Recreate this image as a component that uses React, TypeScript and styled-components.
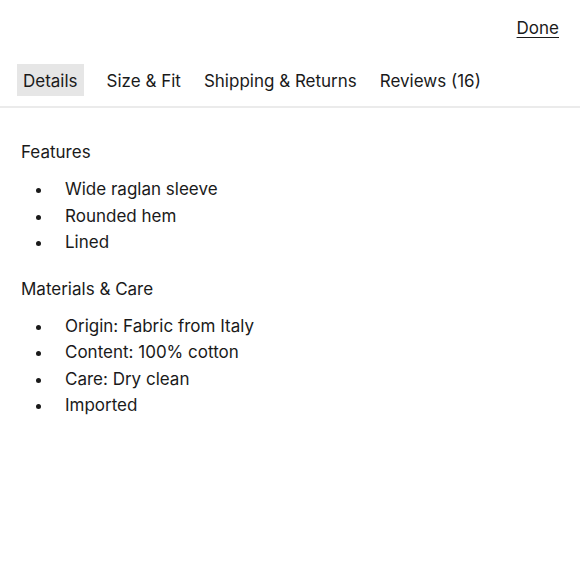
import styled, { createGlobalStyle } from 'styled-components';

const GlobalStyle = createGlobalStyle`
  html, body {
    margin: 0;
    padding: 0;
    background: #ffffff;
  }
  body {
    font-family: 'Inter', 'Noto Sans', sans-serif;
    color: #1a1a1a;
    -webkit-font-smoothing: antialiased;
  }
`;

const Page = styled.div`
  width: 580px;
  height: 580px;
  background: #fff;
  overflow: hidden;
`;

const TopBar = styled.header`
  display: flex;
  justify-content: flex-end;
  padding: 18px 21px 0 0;
  height: 48px;
  box-sizing: border-box;
`;

const DoneLink = styled.a`
  font-size: 17px;
  color: #1a1a1a;
  text-decoration: underline;
  text-underline-offset: 3px;
  cursor: pointer;
`;

const Tabs = styled.nav`
  display: flex;
  align-items: center;
  gap: 11px;
  padding: 16px 0 10px 17px;
  border-bottom: 2px solid #ebebeb;
`;

const Tab = styled.button<{ $active?: boolean }>`
  font-family: inherit;
  font-size: 17px;
  color: #1a1a1a;
  border: none;
  height: 32px;
  padding: 2px 6px 0;
  background: ${p => (p.$active ? '#e6e6e6' : 'transparent')};
  cursor: pointer;

  &:first-child {
    margin-right: 6px;
  }
`;

const Content = styled.section`
  padding: 32px 21px 0;
`;

const Heading = styled.h3`
  margin: 0 0 12px;
  font-size: 17px;
  font-weight: 400;
  line-height: 24px;
`;

const List = styled.ul`
  list-style: none;
  margin: 0 0 21px;
  padding: 0;
`;

const Item = styled.li`
  position: relative;
  font-size: 17px;
  line-height: 26.5px;
  padding-left: 44px;

  &::before {
    content: '';
    position: absolute;
    left: 15px;
    top: 12px;
    width: 5px;
    height: 5px;
    border-radius: 50%;
    background: #1a1a1a;
  }
`;

const sections = [
  {
    title: 'Features',
    items: ['Wide raglan sleeve', 'Rounded hem', 'Lined'],
  },
  {
    title: 'Materials & Care',
    items: [
      'Origin: Fabric from Italy',
      'Content: 100% cotton',
      'Care: Dry clean',
      'Imported',
    ],
  },
];

const tabs = ['Details', 'Size & Fit', 'Shipping & Returns', 'Reviews (16)'];

export default function App() {
  return (
    <Page>
      <GlobalStyle />
      <TopBar>
        <DoneLink>Done</DoneLink>
      </TopBar>
      <Tabs>
        {tabs.map((t, i) => (
          <Tab key={t} $active={i === 0}>
            {t}
          </Tab>
        ))}
      </Tabs>
      <Content>
        {sections.map(s => (
          <div key={s.title}>
            <Heading>{s.title}</Heading>
            <List>
              {s.items.map(item => (
                <Item key={item}>{item}</Item>
              ))}
            </List>
          </div>
        ))}
      </Content>
    </Page>
  );
}
